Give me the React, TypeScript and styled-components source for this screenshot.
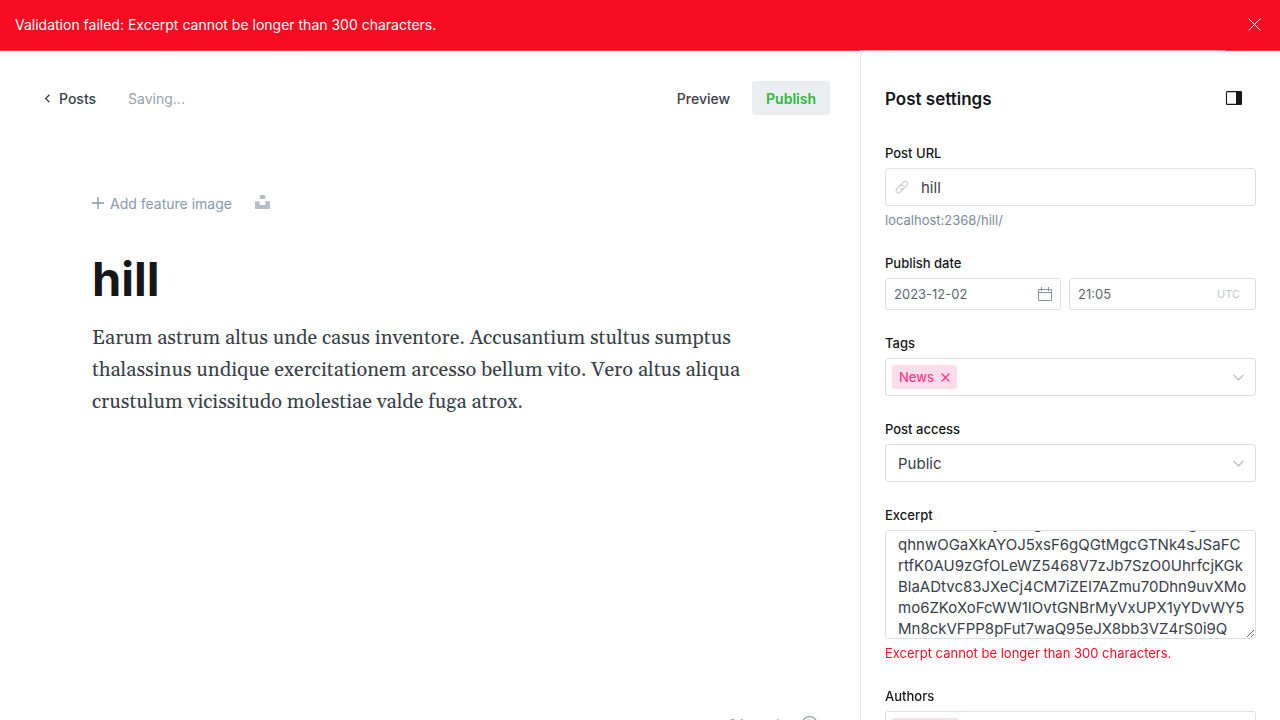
import React, { useLayoutEffect, useRef } from 'react';
import styled, { createGlobalStyle } from 'styled-components';

const GlobalStyle = createGlobalStyle`
  *, *::before, *::after { box-sizing: border-box; }
  body {
    margin: 0;
    background: #ffffff;
    color: #15171a;
    font-family: Inter, "Liberation Sans", sans-serif;
    font-size: 14px;
  }
  button, input, select, textarea { font-family: inherit; margin: 0; }
  button { border: 0; padding: 0; background: none; cursor: pointer; }
  svg { display: block; flex: none; }
`;

const Shell = styled.div`
  display: flex;
  flex-direction: column;
  height: 100vh;
  overflow: hidden;
`;

const Banner = styled.div`
  flex: none;
  display: flex;
  align-items: center;
  justify-content: space-between;
  min-height: 50px;
  padding: 0 19px 0 15px;
  background: #f70c22;
  color: #ffffff;
  font-size: 14px;
  line-height: 20px;
`;

const BannerClose = styled.button`
  padding-bottom: 2px;
  color: #ffffff;
`;

const Workspace = styled.div`
  flex: 0 0 100vh;
  display: grid;
  grid-template-columns: minmax(0, 1fr) 420px;
`;

const Editor = styled.main`
  display: flex;
  flex-direction: column;
  min-width: 0;
  border-top: 1px solid #e8364a;
`;

const Toolbar = styled.header`
  display: flex;
  align-items: center;
  gap: 22px;
  padding: 30px 30px 0 44px;
`;

const BackLink = styled.a`
  display: flex;
  align-items: center;
  gap: 8px;
  color: #394047;
  font-size: 14px;
  font-weight: 500;
  text-decoration: none;
`;

const Status = styled.span`
  flex: 1;
  padding-left: 10px;
  color: #95a1ad;
  font-size: 14px;
`;

const ToolbarButton = styled.button<{ $primary?: boolean }>`
  height: 34px;
  padding: 0 ${(p) => (p.$primary ? 14 : 0)}px;
  border-radius: 3px;
  background: ${(p) => (p.$primary ? '#ebeef0' : 'transparent')};
  color: ${(p) => (p.$primary ? '#2bba3c' : '#394047')};
  font-size: 14px;
  font-weight: ${(p) => (p.$primary ? 600 : 500)};
`;

const Canvas = styled.article`
  flex: 1;
  padding: 78px 92px 0;
`;

const FeatureRow = styled.div`
  display: flex;
  align-items: center;
  gap: 23px;
  height: 20px;
`;

const AddImage = styled.button`
  display: flex;
  align-items: center;
  gap: 6px;
  color: #8a99b0;
  font-size: 14px;
`;

const StockPhoto = styled.button`
  padding-bottom: 2px;
`;

const Title = styled.h1`
  margin: 38px 0 0;
  font-size: 47px;
  line-height: 56px;
  font-weight: 700;
`;

const Body = styled.p`
  margin: 15px 0 0;
  color: #394047;
  font-family: Georgia, Gelasio, "Liberation Serif", serif;
  font-size: 20px;
  line-height: 32px;
`;

const EditorFooter = styled.footer`
  display: flex;
  align-items: center;
  justify-content: flex-end;
  gap: 15px;
  padding: 0 42px 37px;
  color: #95a1ad;
  font-size: 13px;
  line-height: 18px;
`;

const Panel = styled.aside`
  min-width: 0;
  overflow: hidden;
`;

const PanelHeader = styled.header`
  display: flex;
`;

const PanelTitle = styled.h2`
  flex: 1;
  margin: 0;
  padding: 36px 0 34px 24px;
  border-top: 1px solid #fb9aa5;
  border-left: 1px solid #e6e9eb;
  font-size: 17px;
  line-height: 24px;
  font-weight: 600;
`;

const PanelToggle = styled.button`
  display: flex;
  align-items: flex-start;
  width: 55px;
  padding-top: 40px;
  border-top: 1px solid #e8364a;
  color: #15171a;
`;

const Fields = styled.form`
  display: flex;
  flex-direction: column;
  gap: 25px;
  min-height: 100%;
  padding: 0 24px;
  border-left: 1px solid #e6e9eb;
`;

const Field = styled.div`
  display: flex;
  flex-direction: column;
`;

const Label = styled.label`
  margin-bottom: 7px;
  font-size: 13px;
  line-height: 16px;
  font-weight: 500;
`;

const Hint = styled.p<{ $error?: boolean }>`
  margin: 4px 0 0;
  color: ${(p) => (p.$error ? '#f50b23' : '#7c8b9a')};
  font-size: 13px;
  line-height: 20px;
`;

const Box = styled.div<{ $small?: boolean }>`
  display: flex;
  align-items: center;
  gap: 12px;
  height: ${(p) => (p.$small ? 32 : 38)}px;
  min-width: 0;
  padding: 0 ${(p) => (p.$small ? 8 : 9)}px;
  border: 1px solid #dddfe2;
  border-radius: 3px;
  background: #ffffff;
`;

const TagBox = styled(Box)`
  padding: 0 11px 0 6px;
`;

const TextInput = styled.input<{ $small?: boolean }>`
  flex: 1;
  width: 0;
  min-width: 0;
  border: 0;
  padding: 0;
  outline: 0;
  background: transparent;
  color: ${(p) => (p.$small ? '#5d6873' : '#394047')};
  font-size: ${(p) => (p.$small ? 13 : 15)}px;
`;

const DateRow = styled.div`
  display: grid;
  grid-template-columns: 176fr 187fr;
  gap: 8px;
`;

const Zone = styled.span`
  padding-right: 7px;
  color: #c3cad1;
  font-size: 11px;
`;

const Chip = styled.span`
  display: flex;
  align-items: center;
  gap: 7px;
  height: 24px;
  padding: 0 7px;
  border-radius: 3px;
  background: #ffdcea;
  color: #ff3d8b;
  font-size: 13px;
  font-weight: 500;
`;

const ChipRemove = styled.button`
  color: #ff3d8b;
`;

const SelectWrap = styled.div`
  display: grid;
  align-items: center;
  > * { grid-area: 1 / 1; }
  > svg { justify-self: end; margin-right: 12px; pointer-events: none; }
`;

const Select = styled.select`
  appearance: none;
  width: 100%;
  height: 38px;
  padding: 0 12px;
  border: 1px solid #dddfe2;
  border-radius: 3px;
  background: #ffffff;
  color: #394047;
  font-size: 15px;
`;

const TextArea = styled.textarea`
  display: block;
  width: 100%;
  height: 109px;
  padding: 8px 4px 8px 12px;
  border: 1px solid #dddfe2;
  border-radius: 3px;
  color: #394047;
  font-size: 15px;
  line-height: 21px;
  word-break: break-all;
  outline: 0;
  resize: vertical;
`;

const Chevron = () => (
  <svg width="11" height="7" viewBox="0 0 11 7" fill="none" stroke="#aab4be" strokeWidth="1.1">
    <path d="M.6 .8 5.5 5.9 10.4 .8" />
  </svg>
);

const RemoveIcon = () => (
  <svg width="9" height="9" viewBox="0 0 9 9" fill="none" stroke="currentColor" strokeWidth="1.4">
    <path d="M.6 .6 8.4 8.4M8.4 .6 .6 8.4" />
  </svg>
);

const EXCERPT =
  'kwm4bTx7LdyhfoogNvEsK2cXuw5HtBfVg8MiK\n' +
  'qhnwOGaXkAYOJ5xsF6gQGtMgcGTNk4sJSaFC\n' +
  'rtfK0AU9zGfOLeWZ5468V7zJb7SzO0UhrfcjKGk\n' +
  'BlaADtvc83JXeCj4CM7iZEI7AZmu70Dhn9uvXMo\n' +
  'mo6ZKoXoFcWW1IOvtGNBrMyVxUPX1yYDvWY5\n' +
  'Mn8ckVFPP8pFut7waQ95eJX8bb3VZ4rS0i9Q';

export default function App() {
  const excerpt = useRef<HTMLTextAreaElement>(null);

  useLayoutEffect(() => {
    if (excerpt.current) excerpt.current.scrollTop = 26;
  }, []);

  return (
    <Shell>
      <GlobalStyle />
      <Banner role="alert">
        <span>Validation failed: Excerpt cannot be longer than 300 characters.</span>
        <BannerClose aria-label="Close">
          <svg width="13" height="13" viewBox="0 0 13 13" fill="none" stroke="currentColor" strokeWidth="1">
            <path d="M.7 .7 12.3 12.3M12.3 .7 .7 12.3" />
          </svg>
        </BannerClose>
      </Banner>
      <Workspace>
        <Editor>
          <Toolbar>
            <BackLink href="#posts">
              <svg width="7" height="9" viewBox="0 0 7 9" fill="none" stroke="currentColor" strokeWidth="1.3">
                <path d="M5.4 .8 1.7 4.5 5.4 8.2" />
              </svg>
              Posts
            </BackLink>
            <Status>Saving...</Status>
            <ToolbarButton>Preview</ToolbarButton>
            <ToolbarButton $primary>Publish</ToolbarButton>
          </Toolbar>
          <Canvas>
            <FeatureRow>
              <AddImage>
                <svg width="12" height="12" viewBox="0 0 12 12" fill="none" stroke="currentColor" strokeWidth="1.4">
                  <path d="M6 0v12M0 6h12" />
                </svg>
                Add feature image
              </AddImage>
              <StockPhoto aria-label="Choose a stock photo">
                <svg width="15" height="14" viewBox="0 0 15 14" fill="#b5bfc8">
                  <path d="M4.7 0h5.6v3.9H4.7zM10.3 6.2H15V14H0V6.2h4.7v3.9h5.6z" />
                </svg>
              </StockPhoto>
            </FeatureRow>
            <Title>hill</Title>
            <Body>
              Earum astrum altus unde casus inventore. Accusantium stultus sumptus thalassinus undique
              exercitationem arcesso bellum vito. Vero altus aliqua crustulum vicissitudo molestiae valde
              fuga atrox.
            </Body>
          </Canvas>
          <EditorFooter>
            <span>24 words</span>
            <svg width="17" height="17" viewBox="0 0 17 17" fill="none" stroke="currentColor" strokeWidth="1.2">
              <circle cx="8.5" cy="8.5" r="7.8" />
              <path d="M6.2 6.5a2.3 2.3 0 1 1 3.4 2c-.8.4-1.1.8-1.1 1.6M8.5 11.6v1.2" />
            </svg>
          </EditorFooter>
        </Editor>
        <Panel>
          <PanelHeader>
            <PanelTitle>Post settings</PanelTitle>
            <PanelToggle aria-label="Toggle settings">
              <svg width="18" height="14" viewBox="0 0 18 14">
                <rect x="1.5" y=".6" width="15" height="12.8" rx="1" fill="none" stroke="currentColor" strokeWidth="1.1" />
                <path d="M11 .6h5.5v12.8H11z" fill="currentColor" />
              </svg>
            </PanelToggle>
          </PanelHeader>
          <Fields>
            <Field>
              <Label htmlFor="url">Post URL</Label>
              <Box>
                <svg width="14" height="14" viewBox="0 0 24 24" fill="none" stroke="#c5c9cd" strokeWidth="1.8" strokeLinecap="round">
                  <path d="M10.2 8 15 3.1a4.1 4.1 0 0 1 5.9 5.9l-5.2 5.2a4.1 4.1 0 0 1-5.8 0l-.6-.7" />
                  <path d="M13.8 16 9 20.9A4.1 4.1 0 0 1 3.1 15l5.2-5.2a4.1 4.1 0 0 1 5.8 0l.6.7" />
                </svg>
                <TextInput id="url" defaultValue="hill" />
              </Box>
              <Hint>localhost:2368/hill/</Hint>
            </Field>
            <Field>
              <Label htmlFor="date">Publish date</Label>
              <DateRow>
                <Box $small>
                  <TextInput $small id="date" defaultValue="2023-12-02" />
                  <svg width="14" height="14" viewBox="0 0 14 14" fill="none" stroke="#8494a5" strokeWidth="1">
                    <path d="M.5 2.5h13v11H.5zM.5 5.5h13M3.5 0v4M10.5 0v4" />
                  </svg>
                </Box>
                <Box $small>
                  <TextInput $small aria-label="Publish time" defaultValue="21:05" />
                  <Zone>UTC</Zone>
                </Box>
              </DateRow>
            </Field>
            <Field>
              <Label htmlFor="tags">Tags</Label>
              <TagBox>
                <Chip>
                  News
                  <ChipRemove type="button" aria-label="Remove News">
                    <RemoveIcon />
                  </ChipRemove>
                </Chip>
                <TextInput id="tags" />
                <Chevron />
              </TagBox>
            </Field>
            <Field>
              <Label htmlFor="access">Post access</Label>
              <SelectWrap>
                <Select id="access" defaultValue="Public">
                  <option>Public</option>
                </Select>
                <Chevron />
              </SelectWrap>
            </Field>
            <Field>
              <Label htmlFor="excerpt">Excerpt</Label>
              <TextArea id="excerpt" ref={excerpt} defaultValue={EXCERPT} spellCheck={false} />
              <Hint $error>Excerpt cannot be longer than 300 characters.</Hint>
            </Field>
            <Field>
              <Label htmlFor="authors">Authors</Label>
              <TagBox>
                <Chip>
                  Ghost
                  <ChipRemove type="button" aria-label="Remove Ghost">
                    <RemoveIcon />
                  </ChipRemove>
                </Chip>
                <TextInput id="authors" />
                <Chevron />
              </TagBox>
            </Field>
          </Fields>
        </Panel>
      </Workspace>
    </Shell>
  );
}
